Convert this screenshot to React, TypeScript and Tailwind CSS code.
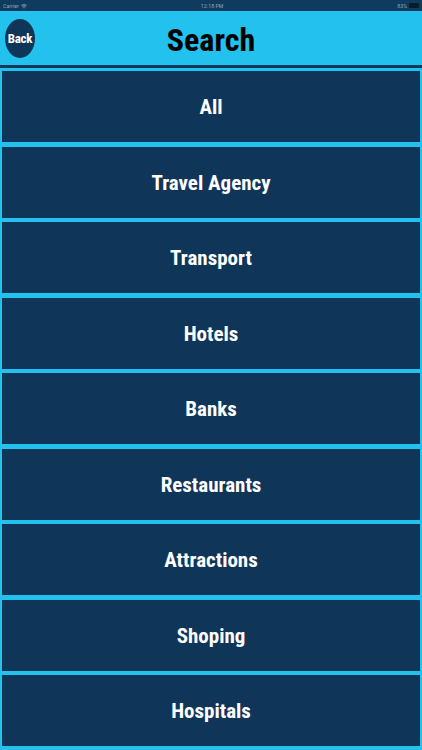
import { Wifi } from 'lucide-react'

const ITEMS = ['All', 'Travel Agency', 'Transport', 'Hotels', 'Banks', 'Restaurants', 'Attractions', 'Shoping', 'Hospitals']

const condensed = { fontFamily: '"Roboto Condensed", "Liberation Sans Narrow", Roboto, sans-serif' }

export default function App() {
  return (
    <div className="w-[422px] h-[750px] bg-[#22c1ee] flex flex-col overflow-hidden" style={condensed}>
      {/* status bar */}
      <div className="h-[11px] bg-[#0e3b5e] flex items-center justify-between px-[3px] text-[6px] text-[#8aa2b8] leading-none">
        <span className="flex items-center gap-[2px]">
          Carrier <Wifi className="h-[6px] w-[6px]" strokeWidth={3} />
        </span>
        <span>12:18 PM</span>
        <span className="flex items-center gap-[2px]">
          83%
          <span className="inline-block w-[10px] h-[5px] bg-[#0b1b2a] rounded-[1px]" />
        </span>
      </div>

      {/* header */}
      <div className="relative h-[54px] flex items-center justify-center pt-[4px]">
        <button className="absolute left-[5px] top-[8px] w-[30px] h-[39px] rounded-[50%] bg-[#0f3559] text-white text-[13px] font-bold tracking-tight">
          Back
        </button>
        <h1 className="text-[32px] font-bold text-black leading-none">Search</h1>
      </div>
      <div className="h-[3px] bg-[#0d3a5a]" />

      {/* list */}
      <div className="flex flex-col gap-[4.5px] px-[2px] pt-[3px]">
        {ITEMS.map((item) => (
          <div
            key={item}
            className="h-[71px] shrink-0 bg-[#0f3559] flex items-center justify-center pt-[3px] text-white text-[21px] font-bold"
          >
            {item}
          </div>
        ))}
      </div>
    </div>
  )
}
